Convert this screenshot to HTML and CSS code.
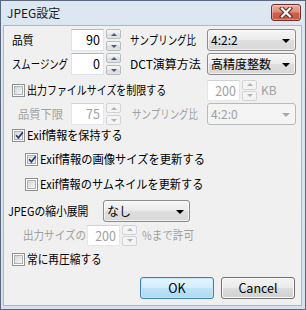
FILE: index.html
```html
<!DOCTYPE html>
<html lang="ja">
<head>
<meta charset="utf-8">
<title>JPEG設定</title>
<link rel="stylesheet" href="styles.css">
</head>
<body>
<div class="window">
  <div class="titlebar">
    <span class="title">JPEG設定</span>
    <span class="close">
      <svg width="14" height="11" viewBox="0 0 14 11"><path d="M3 1.5 L11 9.5 M11 1.5 L3 9.5" stroke="#5a2a25" stroke-width="4.2" stroke-linecap="square"/><path d="M3 1.5 L11 9.5 M11 1.5 L3 9.5" stroke="#fff" stroke-width="2.2" stroke-linecap="square"/></svg>
    </span>
  </div>
  <div class="client">
    <div class="row r1">
      <span class="lbl lbl-main s90">品質</span>
      <span class="edit">90</span>
      <span class="spin"><span class="sb up"></span><span class="sb down"></span></span>
      <span class="lbl lbl-side s79">サンプリング比</span>
      <span class="combo w-side">4:2:2</span>
    </div>
    <div class="row r2">
      <span class="lbl lbl-main s78">スムージング</span>
      <span class="edit">0</span>
      <span class="spin"><span class="sb up"></span><span class="sb down"></span></span>
      <span class="lbl lbl-side">DCT演算方法</span>
      <span class="combo w-side">高精度整数</span>
    </div>
    <div class="row r3">
      <span class="check ind0 w-limit"><span class="box"></span><span class="txt s83">出力ファイルサイズを制限する</span></span>
      <span class="edit dis">200</span>
      <span class="spin dis"><span class="sb up"></span><span class="sb down"></span></span>
      <span class="lbl dis kb">KB</span>
    </div>
    <div class="row r4">
      <span class="lbl dis lbl-sub s94">品質下限</span>
      <span class="edit dis">75</span>
      <span class="spin dis"><span class="sb up"></span><span class="sb down"></span></span>
      <span class="lbl dis lbl-side2 s79">サンプリング比</span>
      <span class="combo dis w-side">4:2:0</span>
    </div>
    <div class="row r5">
      <span class="check ind0"><span class="box on"><svg width="9" height="9" viewBox="0 0 9 9"><path d="M1.2 4.3 L3.4 6.8 L7.8 1.2" fill="none" stroke="#24397a" stroke-width="1.7"/></svg></span><span class="txt s92">Exif情報を保持する</span></span>
    </div>
    <div class="row r6">
      <span class="check ind1"><span class="box on"><svg width="9" height="9" viewBox="0 0 9 9"><path d="M1.2 4.3 L3.4 6.8 L7.8 1.2" fill="none" stroke="#24397a" stroke-width="1.7"/></svg></span><span class="txt s94">Exif情報の画像サイズを更新する</span></span>
    </div>
    <div class="row r7">
      <span class="check ind1"><span class="box"></span><span class="txt s93">Exif情報のサムネイルを更新する</span></span>
    </div>
    <div class="row r8">
      <span class="lbl lbl-jpeg s90">JPEGの縮小展開</span>
      <span class="combo w-shrink">なし</span>
    </div>
    <div class="row r9">
      <span class="lbl dis lbl-out s88">出力サイズの</span>
      <span class="edit dis">200</span>
      <span class="spin dis"><span class="sb up"></span><span class="sb down"></span></span>
      <span class="lbl dis pct s88">%まで許可</span>
    </div>
    <div class="row r10">
      <span class="check ind0"><span class="box"></span><span class="txt s89">常に再圧縮する</span></span>
    </div>
    <div class="row buttons">
      <span class="btn default">OK</span>
      <span class="btn">Cancel</span>
    </div>
  </div>
</div>
</body>
</html>
```
FILE: styles.css
```css
* { box-sizing: border-box; }
html, body { margin: 0; padding: 0; background: #fff; }
body {
  font-family: "Noto Sans CJK JP", "Noto Sans", sans-serif;
  font-size: 12px;
  color: #000;
}
.window {
  width: 306px;
  height: 310px;
  border: 1px solid #5a6a7c;
  background: linear-gradient(#dde7f2, #d4e0ee);
  padding: 0 3px 3px 2px;
  display: flex;
  flex-direction: column;
}
.titlebar {
  height: 24px;
  display: flex;
  align-items: flex-start;
  justify-content: space-between;
}
.title {
  margin: 4px 0 0 4px;
  line-height: 16px;
  color: #1a1a1a;
}
.close {
  margin: 3px 1px 0 0;
  width: 30px;
  height: 17px;
  border: 1px solid #6b2f28;
  border-radius: 3px;
  background: linear-gradient(#eab0a4, #de8d7d 45%, #cf5f4b 55%, #c8553f);
  box-shadow: inset 0 0 0 1px rgba(255,255,255,0.35);
  display: flex;
  align-items: center;
  justify-content: center;
}
.close svg { display: block; }
.client {
  flex: 1;
  border: 1px solid #a9b9cb;
  background: #f0f0f0;
  padding-top: 3px;
  display: flex;
  flex-direction: column;
}
.row {
  display: flex;
  align-items: center;
  height: 22px;
  flex: none;
}
.r2 { margin-top: 2px; }
.r3 { margin-top: 4px; }
.r4 { margin-top: 2px; }
.r5 { height: 20px; }
.r6 { height: 20px; margin-top: 4px; }
.r7 { height: 20px; margin-top: 5px; }
.r8 { margin-top: 6px; }
.r9 { height: 20px; margin-top: 3px; }
.r10 { height: 20px; margin-top: 4px; }
.buttons { margin-top: 8px; justify-content: flex-end; padding-right: 6px; }

/* condensed Japanese labels (Meiryo UI–like proportions) */
.s78, .s79, .s83, .s88, .s89, .s90, .s92, .s93, .s94 { transform-origin: left center; }
.txt { display: inline-block; white-space: nowrap; }
.s78 { transform: scaleX(0.78); }
.s79 { transform: scaleX(0.79); }
.s83 { transform: scaleX(0.83); }
.s88 { transform: scaleX(0.88); }
.s89 { transform: scaleX(0.89); }
.s90 { transform: scaleX(0.90); }
.s92 { transform: scaleX(0.92); }
.s93 { transform: scaleX(0.93); }
.s94 { transform: scaleX(0.94); }

.lbl { white-space: nowrap; line-height: 16px; flex: none; }
.dis { color: #a0a0a0; }
.lbl-main { margin-left: 8px; width: 59px; }
.lbl-side { margin-left: 9px; width: 77px; }
.lbl-sub { margin-left: 14px; width: 53px; }
.lbl-side2 { margin-left: 11px; width: 75px; }
.lbl-jpeg { margin-left: 4px; width: 95px; }
.lbl-out { margin-left: 19px; width: 64px; }
.kb { margin-left: 4px; }
.pct { margin-left: 5px; }

.edit {
  flex: none;
  width: 33px;
  height: 22px;
  background: #fff;
  border: 1px solid #dfe3e9;
  border-top-color: #b5b8bf;
  text-align: right;
  padding-right: 3px;
  line-height: 19px;
  font-size: 12.5px;
}
.r3 .edit, .r9 .edit { height: 21px; }
.edit.dis { border-color: #e3e6ea; border-top-color: #cfd1d5; color: #a0a0a0; }

.spin {
  flex: none;
  margin-left: 2px;
  width: 15px;
  height: 22px;
  display: flex;
  flex-direction: column;
  justify-content: space-between;
}
.r3 .spin, .r9 .spin { height: 21px; }
.sb {
  height: 10px;
  border: 1px solid #b8bcc2;
  border-radius: 2px;
  background: linear-gradient(#f8f8f8, #e8e8e8 50%, #dcdcdc 51%, #e4e4e4);
  display: flex;
  align-items: center;
  justify-content: center;
}
.sb::after {
  content: "";
  width: 0;
  height: 0;
  border-left: 3px solid transparent;
  border-right: 3px solid transparent;
}
.up::after { border-bottom: 3px solid #4b5d86; }
.down::after { border-top: 3px solid #4b5d86; }
.spin.dis .sb { border-color: #d2d4d8; background: #f4f4f4; }
.spin.dis .up::after { border-bottom-color: #b4b4b4; }
.spin.dis .down::after { border-top-color: #b4b4b4; }

.combo {
  flex: none;
  position: relative;
  height: 22px;
  border: 1px solid #8a8a8a;
  border-radius: 3px;
  background: linear-gradient(#f6f6f6, #eaeaea 50%, #dedede 52%, #d8d8d8);
  box-shadow: inset 0 0 0 1px rgba(255,255,255,0.6);
  padding-left: 3px;
  line-height: 20px;
  white-space: nowrap;
}
.combo::after {
  content: "";
  position: absolute;
  right: 5px;
  top: 9px;
  border-left: 4px solid transparent;
  border-right: 4px solid transparent;
  border-top: 4px solid #000;
}
.combo.dis {
  border-color: #b6babe;
  background: #f4f4f4;
  box-shadow: none;
  color: #a0a0a0;
}
.combo.dis::after { border-top-color: #a8a8a8; }
.w-side { width: 89px; }
.w-shrink { width: 87px; }

.check {
  display: flex;
  align-items: center;
  white-space: nowrap;
  line-height: 16px;
  flex: none;
}
.ind0 { margin-left: 8px; }
.ind1 { margin-left: 21px; }
.w-limit { width: 195px; }
.box {
  width: 13px;
  height: 13px;
  margin-right: 2px;
  border: 1px solid #8e8f8f;
  background: #fff;
  padding: 1px;
  display: flex;
  flex: none;
}
.box::before {
  content: "";
  flex: 1;
  border: 1px solid #adb2b8;
  background: linear-gradient(135deg, #d6d6d6, #f6f6f6);
}
.box.on { position: relative; }
.box.on svg { position: absolute; left: 2px; top: 1px; }

.btn {
  width: 74px;
  height: 22px;
  border: 1px solid #707070;
  border-radius: 3px;
  background: linear-gradient(#f2f2f2, #ebebeb 50%, #dddddd 51%, #cfcfcf);
  box-shadow: inset 0 0 0 1px #fbfbfb;
  text-align: center;
  line-height: 20px;
  font-size: 12.5px;
}
.btn + .btn { margin-left: 7px; }
.btn.default {
  border-color: #3c7fb1;
  background: linear-gradient(#e5f4fc, #d4edfb 50%, #bde3f9 51%, #acd9f2);
  box-shadow: inset 0 0 0 1px #c6e8fb;
}
```
